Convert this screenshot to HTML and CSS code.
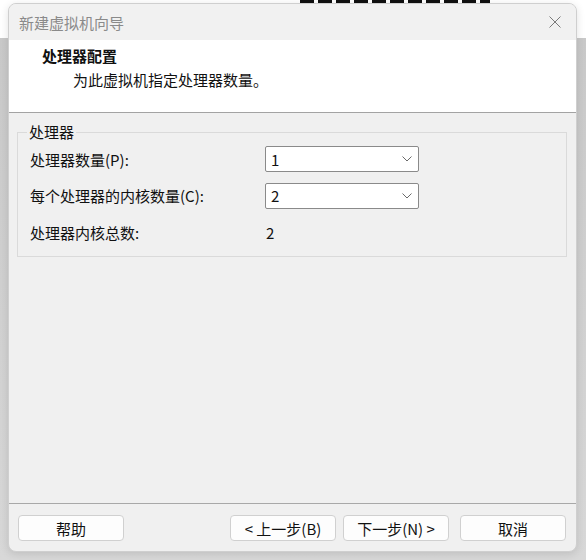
FILE: index.html
```html
<!DOCTYPE html>
<html lang="zh-CN">
  <head>
    <meta charset="UTF-8" />
    <title>新建虚拟机向导</title>
    <link rel="stylesheet" href="styles.css">
  </head>
  <body>
    <div class="backdrop-strip"></div>
    <div class="dialog">
      <div class="titlebar">
        <span class="title">新建虚拟机向导</span>
        <svg class="close" width="12" height="12" viewBox="0 0 12 12">
          <path d="M0.5 0.5 L11.5 11.5 M11.5 0.5 L0.5 11.5" stroke="#7a7a7a" stroke-width="1" fill="none"/>
        </svg>
      </div>

      <div class="header">
        <h1>处理器配置</h1>
        <p>为此虚拟机指定处理器数量。</p>
      </div>

      <div class="content">
        <fieldset class="group">
          <legend>处理器</legend>
          <div class="row">
            <label>处理器数量(P):</label>
            <div class="combo"><span>1</span><svg width="10" height="6" viewBox="0 0 10 6"><path d="M0.5 0.5 L5 5 L9.5 0.5" stroke="#6a6a6a" fill="none"/></svg></div>
          </div>
          <div class="row">
            <label>每个处理器的内核数量(C):</label>
            <div class="combo"><span>2</span><svg width="10" height="6" viewBox="0 0 10 6"><path d="M0.5 0.5 L5 5 L9.5 0.5" stroke="#6a6a6a" fill="none"/></svg></div>
          </div>
          <div class="row">
            <label>处理器内核总数:</label>
            <span class="value">2</span>
          </div>
        </fieldset>
      </div>

      <div class="footer">
        <button class="btn">帮助</button>
        <div class="spacer"></div>
        <button class="btn">&lt; 上一步(B)</button>
        <button class="btn">下一步(N) &gt;</button>
        <button class="btn cancel">取消</button>
      </div>
    </div>
  </body>
</html>
```

FILE: styles.css
```css
* {
  box-sizing: border-box;
}
body {
  margin: 0;
  width: 586px;
  height: 560px;
  overflow: hidden;
  position: relative;
  padding: 3px 0 0 8px;
  font-family: "Noto Sans CJK SC", "Noto Sans", sans-serif;
  font-size: 15px;
  color: #111;
  background: linear-gradient(to bottom, #ffffff 0, #ffffff 38px, #c9c9c9 38px, #d8d8d8 100%);
}
/* bits of the window behind, mostly covered */
.backdrop-strip {
  position: absolute;
  left: 300px;
  top: 0;
  width: 190px;
  height: 3px;
  background: repeating-linear-gradient(to right, #111 0, #111 14px, #fff 14px, #fff 18px);
}
.dialog {
  position: relative;
  width: 569px;
  height: 549px;
  display: flex;
  flex-direction: column;
  background: #f0f0f0;
  border: 1px solid #cfcfcf;
  border-radius: 8px;
  overflow: hidden;
  box-shadow: 0 2px 8px rgba(0, 0, 0, 0.12);
}
.titlebar {
  height: 36px;
  display: flex;
  align-items: center;
  justify-content: space-between;
  padding: 0 15px 0 10px;
  background: #f1f1f1;
}
.title {
  font-size: 15px;
  color: #8a8a8a;
}
.header {
  height: 73px;
  background: #fff;
  border-bottom: 1px solid #a3a3a3;
  padding: 6px 0 0 33px;
}
.header h1 {
  margin: 0;
  font-size: 15px;
  font-weight: 700;
  line-height: 20px;
}
.header p {
  margin: 4px 0 0 31px;
  font-size: 15px;
  line-height: 20px;
}
.content {
  flex: 1;
  padding: 10px 9px 0 8px;
}
.group {
  margin: 0;
  height: 134px;
  border: 1px solid #dadada;
  padding: 0 0 0 12px;
}
.group legend {
  padding: 0 2px;
  margin-left: -3px;
  line-height: 18px;
}
.row {
  display: flex;
  align-items: center;
  height: 36.5px;
}
.row label {
  width: 235px;
}
.combo {
  width: 154px;
  height: 26px;
  display: flex;
  align-items: center;
  justify-content: space-between;
  padding: 0 6px 0 5px;
  background: #fff;
  border: 1px solid #8a8a8a;
  border-radius: 2px;
}
.value {
  padding-left: 1px;
}
.footer {
  height: 48px;
  border-top: 1px solid #a8a8a8;
  display: flex;
  align-items: flex-start;
  gap: 7px;
  padding: 11px 10px 0 9px;
}
.spacer {
  flex: 1;
}
.btn {
  width: 106px;
  height: 26px;
  font-family: inherit;
  font-size: 15px;
  color: #111;
  background: #fdfdfd;
  border: 1px solid #d0d0d0;
  border-radius: 4px;
}
.btn.cancel {
  margin-left: 4px;
}
```
